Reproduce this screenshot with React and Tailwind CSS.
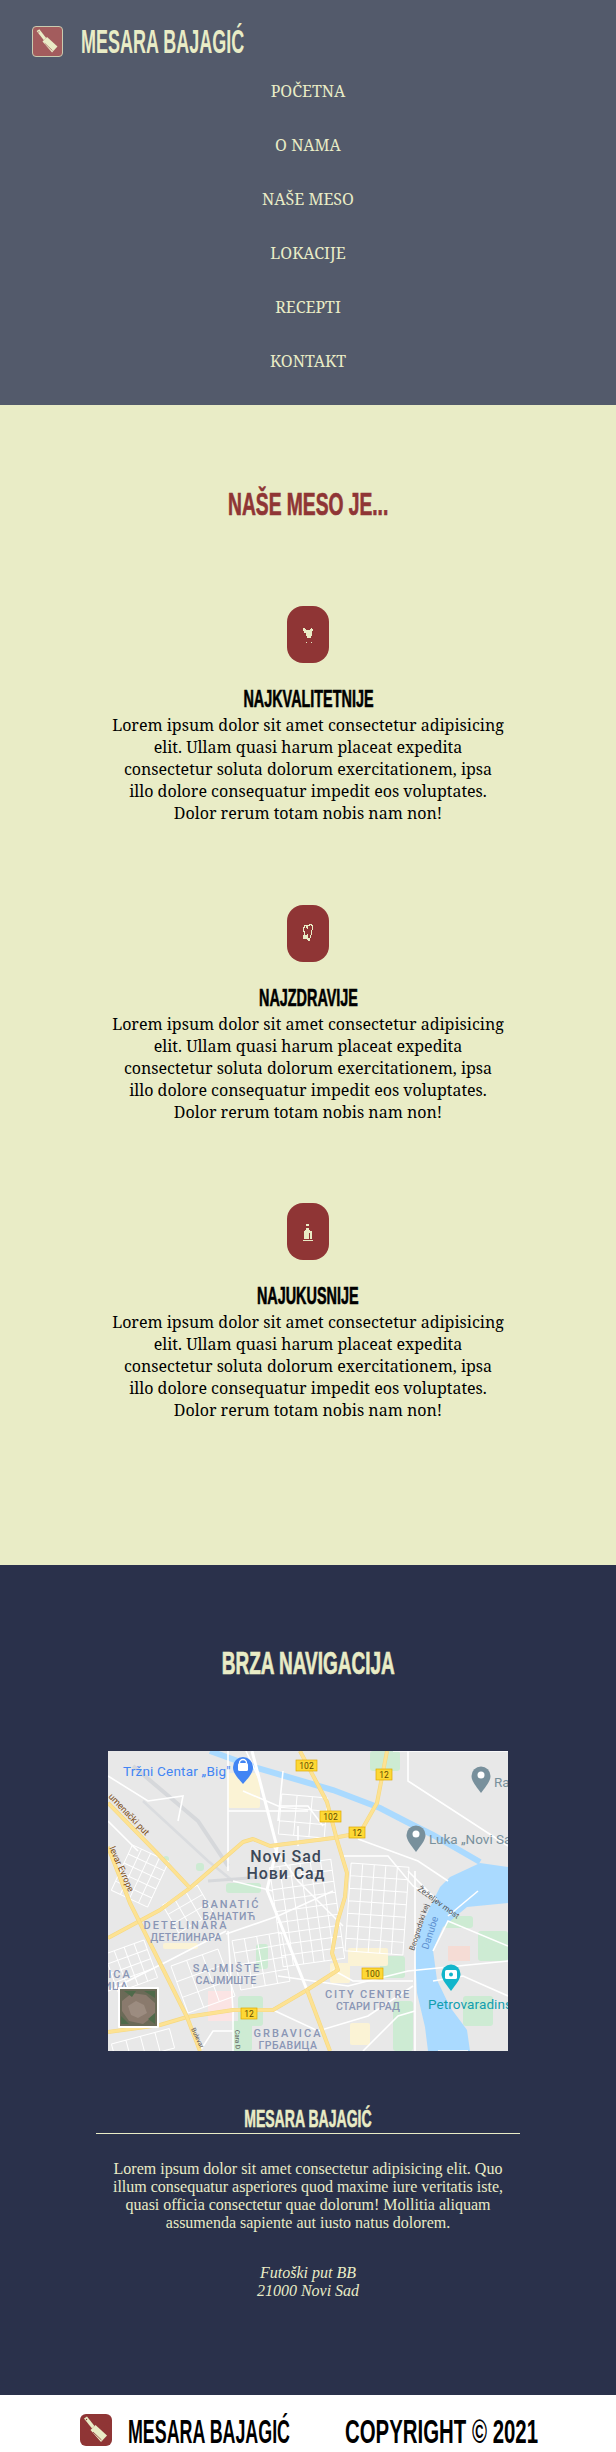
const cream = "#e9ecc6";

function Cleaver({ line }) {
  return (
    <svg viewBox="0 0 32 32" className="w-full h-full">
      <polygon points="4,4.5 7,2.500 14.500,12 12,14.500" fill={cream} />
      <polygon points="10.500,16 15.500,11 27,21.500 21,28" fill={cream} />
      <path d="M13 18L21.500 26" fill="none" stroke={line} strokeWidth="0.8" />
      <circle cx="6.500" cy="5.500" r="0.7" fill={line} />
    </svg>
  );
}

function Cow() {
  return (
    <svg width="12" height="20" viewBox="0 0 12 20" shapeRendering="crispEdges" fill={cream}>
      <path d="M1 3h2v1h1v1h4V4h1V3h1v1h1v2h-1v5H9v2H5v-2H4V8H2V6H1z" />
      <rect x="4" y="17" width="1" height="1" />
      <rect x="9" y="17" width="1" height="1" />
    </svg>
  );
}

function Pepper() {
  return (
    <svg width="12" height="22" viewBox="0 0 12 22" shapeRendering="crispEdges" fill="none" stroke={cream} strokeWidth="1">
      <path d="M2 2v2H1v4h1v4M2 2h2v2h1v2M5 4V2h2v-1h2v1h1v5l-1 5-1 3H7v2H6v-2" />
      <rect x="1" y="12" width="3" height="3" fill={cream} />
      <path d="M5.500 11v6" />
    </svg>
  );
}

function Bottle() {
  return (
    <svg width="12" height="20" viewBox="0 0 12 20" shapeRendering="crispEdges" fill={cream}>
      <rect x="4" y="2" width="3" height="2" />
      <path d="M4 6h3v2h1v1h2v8H2V9h1V8h1z" />
      <rect x="7" y="11" width="1" height="6" fill="#8f3535" />
      <rect x="1" y="18" width="10" height="1" />
    </svg>
  );
}

function Grid({ x, y, w, h, nx, ny, rot = 0, width = 1.2 }) {
  const parts = [];
  for (let i = 0; i <= nx; i++) parts.push(`M${x + (w * i) / nx} ${y}v${h}`);
  for (let j = 0; j <= ny; j++) parts.push(`M${x} ${y + (h * j) / ny}h${w}`);
  return (
    <path d={parts.join("")} transform={`rotate(${rot} ${x + w / 2} ${y + h / 2})`} fill="none" stroke="#fff" strokeWidth={width} />
  );
}

function MapDrawing() {
  const yellow = [
    "M0 187L52 159 82 137 135 91 145 88 162 95 225 87 252 82 269 52 279 0",
    "M192 0L219 51 229 89 239 122 237 146 230 169 224 202 230 219 199 239 165 259 125 259 79 266 52 274 0 281",
    "M0 52L49 102 82 137",
    "M0 96L22 152 49 206 79 266 92 300",
    "M199 239L222 300",
  ];
  const white = [
    "M0 25L40 50 75 45 70 70", "M120 0V120 M120 60H165", "M135 40L170 55H200L215 75",
    "M118 183L170 165 225 140", "M118 180L60 210 0 240", "M165 95L190 130 235 175", "M232 105L280 105 305 135 330 150",
    "M170 225L240 235 300 220 400 210", "M225 219L245 230H305", "M307 120V300",
    "M325 200L340 170 400 195", "M325 230L355 225 400 245", "M92 300L105 280H125 M165 259L210 280 260 265 305 235", "M255 300L290 265 307 260",
    "M175 20L170 70 M200 60H165 M190 75V95", "M330 150L300 120 M340 165L370 140", "M120 180L125 260V300",
    "M138 0L152 30 M0 70L30 100", "M300 0V30L400 95", "M250 88L310 110 340 130", "M285 0H400",
    "M330 300L360 300", "M125 130L165 140",
  ];
  const green = [
    [262, 0, 30, 20], [118, 132, 35, 10], [148, 193, 12, 25], [130, 245, 25, 30], [272, 205, 25, 22], [285, 250, 20, 50], [370, 180, 30, 30], [335, 165, 30, 12], [124, 270, 20, 30], [55, 105, 6, 8], [88, 112, 8, 8], [355, 245, 30, 30],
  ];
  const sand = [
    [120, 22, 32, 35], [240, 197, 40, 18], [222, 212, 20, 20], [242, 272, 20, 22], [55, 192, 35, 6],
  ];
  const shields = [
    [188, 9, 21, 11, "102"], [268, 18, 16, 11, "12"], [212, 60, 21, 11, "102"], [241, 76, 16, 11, "12"], [254, 217, 21, 11, "100"], [133, 257, 16, 11, "12"],
  ];
  const labels = [
    ["BANATIĆ", 123, 157, 11, 1.8], ["БАНАТИЋ", 121, 169, 10.5, 0.6], ["DETELINARA", 78, 178, 11, 2],
    ["ДЕТЕЛИНАРА", 78, 190, 10.5, 0.3], ["SAJMIŠTE", 119, 221, 11, 2], ["САЈМИШТЕ", 118, 233, 10.5, 0.3],
    ["CITY CENTRE", 260, 247, 11, 1.7], ["СТАРИ ГРАД", 260, 259, 10.5, 0.1], ["GRBAVICA", 180, 286, 11, 2],
    ["ГРБАВИЦА", 180, 298, 10.5, 0.5], ["ICA", 12, 227, 11, 2], ["ИЦА", 8, 239, 10.5, 0.5],
  ];
  return (
    <svg viewBox="0 0 400 300" className="block w-full h-full" fontFamily="Roboto, sans-serif">
      <rect width="400" height="300" fill="#e8e8e8" />
      {green.map(([x, y, w, h], i) => (
        <rect key={i} x={x} y={y} width={w} height={h} rx="3" fill="#cdebd3" />
      ))}
      {sand.map(([x, y, w, h], i) => (
        <rect key={i} x={x} y={y} width={w} height={h} rx="2" fill="#fbf3d5" />
      ))}
      <rect x="100" y="240" width="25" height="30" fill="#fbe4e4" />
      <rect x="340" y="195" width="22" height="15" fill="#f5dcd5" />
      <path d="M25 15L90 70 120 115" fill="none" stroke="#d6d8db" strokeWidth="4" />
      <path d="M35 50L100 110 125 130" fill="none" stroke="#dadcdf" strokeWidth="2.500" />
      <path d="M100 130L170 125" fill="none" stroke="#d6d8db" strokeWidth="3" />
      <path d="M102 0L149 17 225 39 272 57 299 71 325 84 372 111" fill="none" stroke="#aadaff" strokeWidth="6" />
      <path d="M372 112L342 126 332 136 322 156 312 179 307 202 309 242 317 276 320 300H362L359 279 342 256 329 229 325 199 335 176 359 156 400 152V116Z" fill="#aadaff" />
      <Grid x={168} y={112} w={62} h={100} nx={6} ny={9} rot={-8} width={1} />
      <Grid x={240} y={114} w={58} h={88} nx={5} ny={7} rot={4} width={1} />
      <Grid x={12} y={100} w={40} h={50} nx={4} ny={5} rot={25} width={1} />
      <Grid x={2} y={195} w={42} h={40} nx={4} ny={4} rot={-20} width={1} />
      <Grid x={128} y={185} w={50} h={50} nx={4} ny={4} rot={-10} width={1} />
      <Grid x={60} y={142} w={40} h={32} nx={3} ny={3} rot={-30} width={1} />
      <Grid x={172} y={45} w={46} h={40} nx={3} ny={3} rot={5} width={1} />
      <Grid x={70} y={205} w={50} h={50} nx={3} ny={3} rot={-20} width={1} />
      <Grid x={5} y={285} w={60} h={20} nx={4} ny={1} rot={-15} width={1} />
      <path d="M144 0L169 96 159 139 199 239" fill="none" stroke="#fff" strokeWidth="3" />
      {white.map((d, i) => (
        <path key={i} d={d} fill="none" stroke="#fff" strokeWidth="1.600" />
      ))}
      {yellow.map((d, i) => (
        <g key={i} fill="none" strokeLinejoin="round">
          <path d={d} stroke="#f6d980" strokeWidth="4" />
          <path d={d} stroke="#fde293" strokeWidth="2.800" />
        </g>
      ))}
      {shields.map(([x, y, w, h, t]) => (
        <g key={x}>
          <rect x={x} y={y} width={w} height={h} fill="#fdd835" stroke="#e0a800" strokeWidth="0.7" />
          <text x={x + w / 2} y={y + 8.6} fontSize="8.500" textAnchor="middle" fill="#5f4a00">{t}</text>
        </g>
      ))}
      <text x="15" y="25" fontSize="13.500" fill="#4285f4" letterSpacing="0.2">Tržni Centar „Big"</text>
      <path d="M135 33c-8-9-10-12-10-17a10 10 0 0 1 20 0c0 5-2 8-10 17z" fill="#4285f4" />
      <rect x="130" y="12" width="10" height="8" rx="1.500" fill="#fff" />
      <path d="M131.500 12a3.500 3.500 0 0 1 7 0" fill="none" stroke="#fff" strokeWidth="1.300" />
      {[[373, 15], [308, 74]].map(([x, y]) => (
        <g key={x}>
          <path d={`M${x} ${y + 27}c-7-9-9.500-13-9.500-17a9.500 9.500 0 0 1 19 0c0 4-2.500 8-9.500 17z`} fill="#78909c" />
          <circle cx={x} cy={y + 9} r="3.500" fill="#fff" />
        </g>
      ))}
      <text x="386" y="36" fontSize="13.500" fill="#78909c">Ra</text>
      <text x="321" y="93" fontSize="13.500" fill="#78909c">Luka „Novi Sad</text>
      <text x="178" y="111" fontSize="16" fontWeight="500" textAnchor="middle" fill="#3c4858" letterSpacing="1">Novi Sad</text>
      <text x="178" y="128" fontSize="16" fontWeight="500" textAnchor="middle" fill="#3c4858" letterSpacing="0.9">Нови Сад</text>
      {labels.map(([t, x, y, s, ls]) => (
        <text key={t} x={x} y={y} fontSize={s} fontWeight="500" textAnchor="middle" fill="#8a96b5" letterSpacing={ls}>{t}</text>
      ))}
      <path d="M343 240c-7-9-9.500-13-9.500-17a9.500 9.500 0 0 1 19 0c0 4-2.500 8-9.500 17z" fill="#12b5cb" />
      <rect x="337" y="219" width="12" height="9" rx="1.500" fill="#fff" />
      <circle cx="343" cy="223.500" r="2" fill="#12b5cb" />
      <text x="320" y="258" fontSize="13.500" fill="#129eaf" letterSpacing="0.1">Petrovaradins</text>
      <text transform="translate(320 199) rotate(-72)" fontSize="10" fill="#5c8fd0">Danube</text>
      <text transform="translate(309 139) rotate(36)" fontSize="8" fill="#555">Žeželjev most</text>
      <text transform="translate(306 200) rotate(-72)" fontSize="7.500" fill="#555">Beogradski kej</text>
      <text transform="translate(0 46) rotate(46)" fontSize="9" fill="#7a4a10">umenački put</text>
      <text transform="translate(1 97) rotate(66)" fontSize="9" fill="#7a4a10">levar Evrope</text>
      <text transform="translate(83 278) rotate(65)" fontSize="6.500" fill="#555">Bulevar</text>
      <text transform="translate(127 279) rotate(88)" fontSize="6.500" fill="#555">Cara D</text>
      <rect x="10" y="236" width="41" height="41" rx="1" fill="#fff" />
      <rect x="12" y="238" width="37" height="37" fill="#6b6a57" />
      <path d="M14 250l10-8 14 2 9 8v12l-12 9-14-3-7-10z" fill="#8a7a6d" />
      <path d="M16 240l8 6 4-6zM36 240l11 7v-7zM13 265l8 8h-8zM40 268l7-6v11z" fill="#4f6a4a" />
      <path d="M20 255l8-5 8 4 3 8-9 5-7-3z" fill="#9c8c80" />
    </svg>
  );
}

function Condensed({ children, sx }) {
  return <span className={`inline-block whitespace-nowrap font-bold font-['Liberation_Sans_Narrow','Liberation_Sans',sans-serif] ${sx}`}>{children}</span>;
}

const lorem = [
  "Lorem ipsum dolor sit amet consectetur adipisicing",
  "elit. Ullam quasi harum placeat expedita",
  "consectetur soluta dolorum exercitationem, ipsa",
  "illo dolore consequatur impedit eos voluptates.",
  "Dolor rerum totam nobis nam non!",
];

function Card({ title, icon, top }) {
  return (
    <div className={`flex flex-col items-center ${top}`}>
      <div className="w-[42px] h-[57px] rounded-[16px] bg-[#8f3535] flex items-center justify-center">{icon}</div>
      <h3 className="mt-[21px] h-[30px] leading-[28px] text-[24px] text-black">
        <Condensed sx="scale-x-[.6] [-webkit-text-stroke:0.6px_#000]">{title}</Condensed>
      </h3>
      <p className="text-center text-[16px] leading-[22px] text-black">
        {lorem.map((l) => (
          <span key={l} className="block whitespace-nowrap">{l}</span>
        ))}
      </p>
    </div>
  );
}

export default function App() {
  return (
    <div className="w-[616px] overflow-hidden font-['Noto_Serif','DejaVu_Serif_Condensed','DejaVu_Serif',serif]">
      <header className="bg-[#535a6b] h-[405px] text-[#e9ecc6]">
        <div className="h-[64px] pl-[32px] pt-[26px] flex items-start">
          <div className="shrink-0 w-[31px] h-[31px] rounded-[4px] border border-[#c9ccb0] bg-[#a35c5d] overflow-hidden">
            <Cleaver line="#a35c5d" />
          </div>
          <div className="shrink-0 ml-[18px] mt-[-4px] w-[161px] h-[38px] leading-[38px] text-[33px]">
            <Condensed sx="scale-x-[.545] origin-left">MESARA BAJAGIĆ</Condensed>
          </div>
        </div>
        <nav className="text-center text-[16px]">
          {["POČETNA", "O NAMA", "NAŠE MESO", "LOKACIJE", "RECEPTI", "KONTAKT"].map((n) => (
            <a key={n} className="block py-4 leading-[22px]">{n}</a>
          ))}
        </nav>
      </header>

      <section className="bg-[#e9ecc6] h-[1160px] pt-[80px]">
        <h2 className="h-[36px] leading-[36px] text-center text-[31px] text-[#8f3535]">
          <Condensed sx="scale-x-[.62] [-webkit-text-stroke:0.7px_#8f3535]">NAŠE MESO JE...</Condensed>
        </h2>
        <Card top="mt-[85px]" title="NAJKVALITETNIJE" icon={<Cow />} />
        <Card top="mt-[81px]" title="NAJZDRAVIJE" icon={<Pepper />} />
        <Card top="mt-[80px]" title="NAJUKUSNIJE" icon={<Bottle />} />
      </section>

      <section className="bg-[#2a314b] h-[830px] pt-[81px] text-[#e9ecc6] font-['Liberation_Serif',serif]">
        <h2 className="h-[36px] leading-[36px] text-center text-[31px]">
          <Condensed sx="scale-x-[.612] [-webkit-text-stroke:0.7px_#e9ecc6]">BRZA NAVIGACIJA</Condensed>
        </h2>
        <div className="mt-[69px] mx-auto w-[400px] h-[300px]">
          <MapDrawing />
        </div>
        <h3 className="mt-[54px] h-[28px] leading-[28px] text-center text-[24px]">
          <Condensed sx="scale-x-[.585] [-webkit-text-stroke:0.6px_#e9ecc6]">MESARA BAJAGIĆ</Condensed>
        </h3>
        <div className="mx-auto w-[424px] h-px bg-[#e9ecc6]"></div>
        <p className="mt-[26px] text-center text-[16px] leading-[18px]">
          Lorem ipsum dolor sit amet consectetur adipisicing elit. Quo<br />
          illum consequatur asperiores quod maxime iure veritatis iste,<br />
          quasi officia consectetur quae dolorum! Mollitia aliquam<br />
          assumenda sapiente aut iusto natus dolorem.
        </p>
        <p className="mt-[32px] text-center text-[16px] leading-[18px] italic">
          Futoški put BB<br />21000 Novi Sad
        </p>
      </section>

      <footer className="bg-white h-[57px] pt-[19px] flex items-start text-black">
        <div className="shrink-0 ml-[80px] w-[32px] h-[32px] rounded-[6px] bg-[#8f3535] overflow-hidden">
          <Cleaver line="#8f3535" />
        </div>
        <div className="shrink-0 ml-[16px] w-[217px] h-[32px] leading-[32px] text-[34px]">
          <Condensed sx="scale-x-[.525] origin-left">MESARA BAJAGIĆ</Condensed>
        </div>
        <div className="shrink-0 w-[189px] h-[32px] leading-[32px] text-[34px]">
          <Condensed sx="scale-x-[.6] origin-left">COPYRIGHT © 2021</Condensed>
        </div>
      </footer>
    </div>
  );
}
